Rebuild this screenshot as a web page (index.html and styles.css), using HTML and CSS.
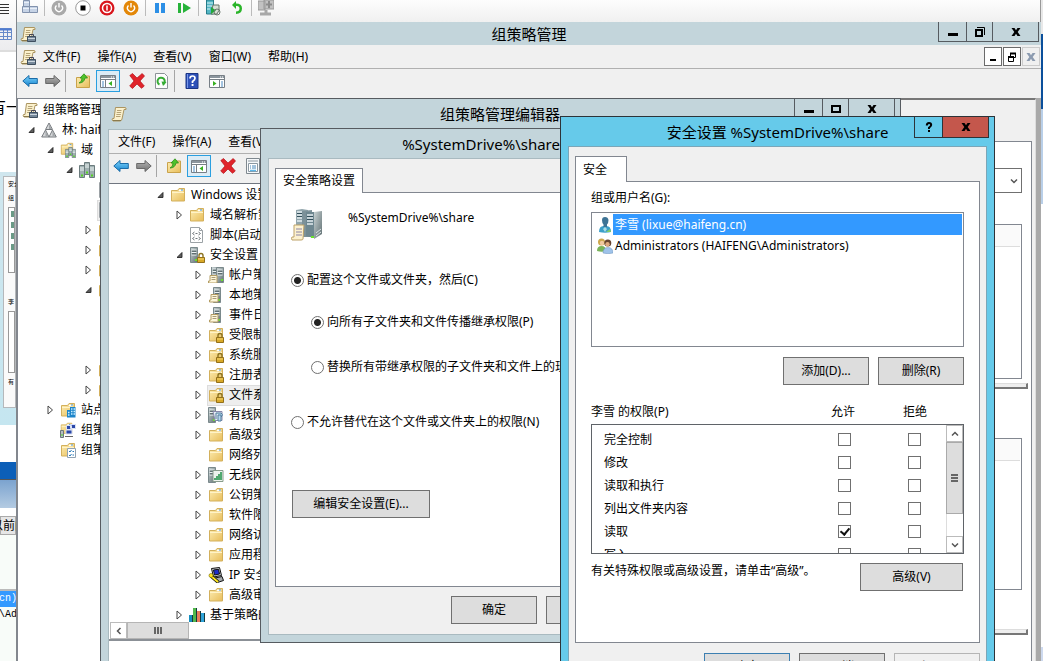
FILE: index.html
```html
<!DOCTYPE html>
<html lang="zh-CN">
<head>
<meta charset="utf-8">
<title>组策略管理</title>
<link rel="stylesheet" href="styles.css">
</head>
<body>
<svg class="defs" width="0" height="0" aria-hidden="true">
<defs>
<linearGradient id="gFolder" x1="0" y1="0" x2="1" y2="1"><stop offset="0" stop-color="#fdeeb4"/><stop offset="1" stop-color="#e8bd5a"/></linearGradient>
<linearGradient id="gBlue" x1="0" y1="0" x2="0" y2="1"><stop offset="0" stop-color="#7fd4fb"/><stop offset="1" stop-color="#1583cf"/></linearGradient>
<linearGradient id="gGray" x1="0" y1="0" x2="0" y2="1"><stop offset="0" stop-color="#b5b5b5"/><stop offset="1" stop-color="#6f6f6f"/></linearGradient>
<linearGradient id="gSrv" x1="0" y1="0" x2="1" y2="1"><stop offset="0" stop-color="#c9d3d4"/><stop offset="1" stop-color="#5f6f72"/></linearGradient>
<symbol id="open" viewBox="0 0 8 8"><path d="M6.200 1.800v4.400H1.800z" fill="#606060" stroke="#222" stroke-width=".8"/></symbol>
<symbol id="shut" viewBox="0 0 8 10"><path d="M1.500 1v8L6 5z" fill="#fff" stroke="#444"/></symbol>
<symbol id="folder" viewBox="0 0 16 16"><path d="M1.500 14V3.500h6L9 1.500h5.500V14z" fill="url(#gFolder)" stroke="#d3b05c"/><path d="M9 3.500h4" stroke="#fff" stroke-width="1.500"/><path d="M11 3h2" stroke="#3e8fd6"/><path d="M2 5.500h12" stroke="#fff3c8"/></symbol>
<symbol id="lock" viewBox="0 0 16 16"><path d="M10 11V8.500a2 2 0 0 1 4 0V11" fill="none" stroke="#8d7422" stroke-width="1.400"/><path d="M8.500 10.500h7v5h-7z" fill="#d9a928" stroke="#93701a"/><path d="M9 12h6" stroke="#f6d873"/></symbol>
<symbol id="flock" viewBox="0 0 16 16"><use href="#folder"/><use href="#lock"/></symbol>
<symbol id="server" viewBox="0 0 16 16"><path d="M3.500.5h7v15h-7z" fill="url(#gSrv)" stroke="#7a898c"/><path d="M4.500 3h5M4.500 5.500h5M4.500 8h5" stroke="#edf3f4"/><path d="M5 4.200h4M5 6.800h4" stroke="#46575b"/><path d="M8 13h2" stroke="#6bdc2d" stroke-width="2"/></symbol>
<symbol id="slock" viewBox="0 0 16 16"><use href="#server" x="-2"/><use href="#lock"/></symbol>
<symbol id="sheet" viewBox="0 0 16 16"><path d="M3 7.500h7v7.500H1.500v-2H3z" fill="#fdf6dc" stroke="#b39c62"/><path d="M4.500 9.500h4M4.500 11.500h4" stroke="#ab9c74"/></symbol>
<symbol id="sscroll" viewBox="0 0 16 16"><use href="#server" x="2"/><use href="#sheet"/></symbol>
<symbol id="sscroll2" viewBox="0 0 16 16"><use href="#server" y="-1"/><use href="#server" x="5"/><use href="#sheet" x="-1" y="1"/></symbol>
<symbol id="scroll" viewBox="0 0 16 16"><path d="M4.500 1.500h9.500q1.500 0 1 2h-2L11 13q-.5 2-2 2H2q-1.500-1-.5-2.500H3z" fill="#fbf1cd" stroke="#ab9561"/><path d="M6 4.500h4.500M5.700 6.500h4.500M5.400 8.500h4.500M5 10.500h4.500" stroke="#b5a377"/><path d="M2 14.500h8" stroke="#8b7a4c"/></symbol>
<symbol id="gpm" viewBox="0 0 16 16"><use href="#scroll"/><path d="M9.500 10V8.500h4V10" fill="none" stroke="#445"/><path d="M7.500 10.500h8v5h-8z" fill="#76889a" stroke="#3f4f5f"/><path d="M8 12.500h7" stroke="#ccd6de"/></symbol>
<symbol id="forest" viewBox="0 0 16 16"><path d="M8 1l3.500 6.500h-7zM4.500 8L8 15H.7zM11.500 8l3.800 7H8z" fill="#d5d7d9" stroke="#777b7f"/><path d="M8 2l2.500 5H8zM4.500 9L7 14H4.500zM11.500 9l2.500 5h-2.500z" fill="#a2a6a9"/></symbol>
<symbol id="servers" viewBox="0 0 16 16"><path d="M5.500.5h5v12h-5zM.5 3.500h5v12h-5zM10.500 3.500h5v12h-5z" fill="#9fb0b1" stroke="#6c7c7e"/><path d="M6 3h4M6 5h4M1 6h4M1 8h4M11 6h4M11 8h4" stroke="#eef5f5"/><path d="M7 10.500h2M2 13.500h2M12 13.500h2" stroke="#53d321" stroke-width="2"/></symbol>
<symbol id="domains" viewBox="0 0 16 16"><use href="#folder" width="14" height="14"/><use href="#servers" x="5" y="5" width="11" height="11"/></symbol>
<symbol id="sites" viewBox="0 0 16 16"><use href="#folder"/><path d="M7 15.500V8h3V5h5.500v10.500z" fill="#1c84c9"/><path d="M11 7h1.500m1 0H15M11 9.500h1.500m1 0H15M8 10.500h1.500M8 13h1.500M11 12h1.500m1 0H15" stroke="#c8edff" stroke-width="1.300"/></symbol>
<symbol id="model" viewBox="0 0 16 16"><use href="#folder" width="13" height="13"/><path d="M6.500 3.500h5v4h-5zM10.500 2.500h5v4h-5zM6 8h6v4H6z" fill="#2a46a8" stroke="#dbe2f4"/><path d="M.5 8.500h3v7h-3z" fill="#b5bec2" stroke="#6b777c"/><path d="M1 13h2" stroke="#50d322"/><path d="M5 14.500h8" stroke="#666"/></symbol>
<symbol id="result" viewBox="0 0 16 16"><use href="#folder"/><path d="M7.500 6.500h8v9h-8z" fill="#fff" stroke="#91a2b2"/><path d="M9 9l1 1 1.500-2M9 13l1 1 1.500-2M12.500 9.500H14M12.500 13H14" fill="none" stroke="#2679b8"/></symbol>
<symbol id="script" viewBox="0 0 16 16"><path d="M1.500.5h9l3 3v12h-12z" fill="#fff" stroke="#9ca2a6"/><path d="M10.500.5v3h3" fill="none" stroke="#9ca2a6"/><path d="M5.500 5L3.500 6.500l2 1.500M9.500 5l2 1.500-2 1.500M5.500 10l-2 1.500 2 1.500M9.500 10l2 1.500-2 1.500M6.500 6.500h2M6.500 11.500h2" fill="none" stroke="#70777c"/></symbol>
<symbol id="wired" viewBox="0 0 16 16"><use href="#server" x="-3"/><path d="M5 4.500h9v9H7z" fill="#e4edf4" stroke="#88a"/><path d="M8 6h5q2 1 1 3l-1 1M8 6v6m2-4h3v6h-3z" fill="#b6d7ee" stroke="#537d9c"/></symbol>
<symbol id="wireless" viewBox="0 0 16 16"><use href="#server" x="-3"/><path d="M5 3.500h10v11H5z" fill="#eef3ee" stroke="#889c8c"/><path d="M7 13v-2m2 2v-4m2 4V7m2 6V5" stroke="#1d9145" stroke-width="1.500"/></symbol>
<symbol id="ip" viewBox="0 0 16 16"><path d="M3.500 1.500l8-1 2 8-8 1.500z" fill="#d0d4d8" stroke="#111"/><path d="M5.500 3l5-.7L11.500 7 6.500 8z" fill="#1d2dcc" stroke="#111"/><path d="M7 11l7-1.500 1.500 4-6 2z" fill="#a5a9ad" stroke="#111"/><path d="M3 9l7 6" stroke="#111" stroke-width="3.500"/><path d="M3 9l7 6" stroke="#ffe820" stroke-width="2"/><circle cx="3" cy="8.500" r="2" fill="#ffe820" stroke="#776800" stroke-width=".6"/></symbol>
<symbol id="bars" viewBox="0 0 16 16"><path d="M0 8h4v8H0z" fill="#168fc0"/><path d="M4 1h4v15H4z" fill="#51b84b"/><path d="M8 4h4v12H8z" fill="#e97c5b"/><path d="M12 6h4v10h-4z" fill="#2fa3d9"/><path d="M3.500 8v8m4-15v15m4-12v12m4-10v10" stroke="#17383c"/></symbol>
<symbol id="back" viewBox="0 0 16 16"><path d="M.8 8L7 2.500v3h8.300v5H7v3z" fill="url(#gBlue)" stroke="#1b6ca8"/></symbol>
<symbol id="fwd" viewBox="0 0 16 16"><path d="M15.200 8L9 2.500v3H.7v5H9v3z" fill="url(#gGray)" stroke="#696969"/></symbol>
<symbol id="up" viewBox="0 0 16 16"><path d="M1.500 14.500v-10h6L9 3h5.500v11.500z" fill="url(#gFolder)" stroke="#c9a24b"/><path d="M4 10q3-1 3-5H5L9 .8 12.500 5H10q-1 5-6 5z" fill="#4fc22b" stroke="#2c8f18" stroke-width=".8"/></symbol>
<symbol id="panel" viewBox="0 0 16 16"><path d="M.5 2.500h15v12H.5z" fill="#fff" stroke="#777f86"/><path d="M1 4h14" stroke="#8b959d" stroke-width="2"/><path d="M11 4h1m1 0h1" stroke="#fff"/><path d="M5.500 6v8" stroke="#777f86"/><path d="M1 6.500h14" stroke="#777f86"/><path d="M2 9h2m-2 2h2m-2 2h2" stroke="#4b8bc4"/><path d="M12 8v5L8.500 10.500z" fill="#38b020"/></symbol>
<symbol id="panelr" viewBox="0 0 16 16"><path d="M.5 2.500h15v12H.5z" fill="#fff" stroke="#777f86"/><path d="M1 4h14" stroke="#8b959d" stroke-width="2"/><path d="M11 4h1m1 0h1" stroke="#fff"/><path d="M10.500 6v8" stroke="#777f86"/><path d="M1 6.500h14" stroke="#777f86"/><path d="M12 9h2m-2 2h2m-2 2h2" stroke="#4b8bc4"/><path d="M4 8v5l3.500-2.500z" fill="#38b020"/></symbol>
<symbol id="del" viewBox="0 0 16 16"><path d="M.8 2.500L3.500.5 8 5l5.200-4.500L15.500 3 11 8l4.300 5-2.800 2.300L8 11l-4.500 4.500L.7 13 5 8z" fill="#e0242b" stroke="#b4121a" stroke-width=".7"/></symbol>
<symbol id="refresh" viewBox="0 0 16 16"><path d="M1.500.5h9l3 3v12h-12z" fill="#fdfdfd" stroke="#8b9297"/><path d="M5.500 11.500A3.600 3.600 0 1 1 9.500 11" fill="none" stroke="#35ac33" stroke-width="2"/><path d="M7.500 8.500l5 .5-3.500 4z" fill="#35ac33"/></symbol>
<symbol id="help" viewBox="0 0 16 16"><path d="M2 .5h12v15H2z" fill="#2d50b8" stroke="#1b3584"/><path d="M3.500 1v14" stroke="#7897e8"/><path d="M6 5.500q0-2.500 2.500-2.500T11 5.300q0 1.500-2.500 3.200v1.500" fill="none" stroke="#fff" stroke-width="1.700"/><path d="M7.600 12h1.900" stroke="#fff" stroke-width="2"/></symbol>
<symbol id="props" viewBox="0 0 16 16"><path d="M1.500.5h13v15h-13z" fill="#f5f8fa" stroke="#7f888f"/><path d="M3.500 5.500h9v8h-9z" fill="#fff" stroke="#8b98a2"/><path d="M3 3h10" stroke="#8d98a1"/><path d="M5 8h1m1 0h4M5 10h1m1 0h4" stroke="#4487bb"/><path d="M5 12.500h6" stroke="#5cb6e8" stroke-width="1.500"/></symbol>
<symbol id="user" viewBox="0 0 16 16"><path d="M2 15q0-6 4.500-6h3q4.500 0 4.500 6-6 1.500-12 0z" fill="#3c9fc9"/><path d="M8 10l2 2-2 3-2-3z" fill="#a9dbe4"/><path d="M5 3q0-3 3-3t3.500 3q0 3-1.500 4.500V10H6.500V7.500Q5 6 5 3z" fill="#3d7395"/><path d="M9 15l4-3 1 3z" fill="#83ce64"/></symbol>
<symbol id="users" viewBox="0 0 16 16"><circle cx="4.500" cy="4" r="3.500" fill="#cda74b"/><circle cx="5" cy="5" r="2.200" fill="#f2caa0"/><path d="M0 13q0-5 4.500-5T9 13q-4 1.500-9 0z" fill="#79b35a"/><circle cx="10.800" cy="5" r="3.500" fill="#66432f"/><circle cx="10.500" cy="6.300" r="2.200" fill="#e0ab80"/><path d="M6 15q0-5.500 5-5.500t5 5.500q-5 1.500-10 0z" fill="#9fc3ea" stroke="#6c93bd" stroke-width=".5"/></symbol>
<symbol id="bigsrv" viewBox="0 0 32 32"><path d="M5 1l6-1 6 1v27H5z" fill="#92a6ad"/><path d="M11 2l10-1v27H11z" fill="#7c9199"/><path d="M15 3h8v26l-8-2z" fill="#6e8790"/><path d="M23 3l8-1v23l-8 5z" fill="url(#gSrv)"/><path d="M6 3h5M6 6h5M6 9h5M6 12h5M16 6h6M16 9h6M16 12h6M16 15h6" stroke="#e3edf0" stroke-width="1.500"/><path d="M6 4.500h5M6 7.500h5M16 7.500h6M16 10.500h6" stroke="#34505c"/><path d="M20 28h3" stroke="#67e22c" stroke-width="2"/><path d="M25 24l5-4M25 27l5-4" stroke="#dce3e5"/><path d="M3 16h10l-1 14q0 1-2 1H1q-1-2 0-3h2z" fill="#fcf1cf" stroke="#bda269"/><path d="M5 20h6M5 23h6M5 26h6" stroke="#8b84a5"/></symbol>
<symbol id="vmnet" viewBox="0 0 16 16"><path d="M1.500.5h6v6h-6zM.5 6.500h7v6h-7zM7.500 6.500h8v6h-8z" fill="#c6d3e6" stroke="#8292ad"/><path d="M2 2.500h5M1 8.500h6M8 8.500h7" stroke="#e9eff8"/></symbol>
<symbol id="vmsrv" viewBox="0 0 16 16"><path d="M1.500 0h7v14h-7z" fill="#54b6c5" stroke="#257b89"/><path d="M2 3h6M2 6h6M2 9h3" stroke="#d9f4f6"/><path d="M8 5h6q1 6-2 9H6z" fill="#d8dfd6" stroke="#66766a"/><path d="M6 7v7l5-3.500z" fill="#21a83a"/><circle cx="12" cy="12" r="3" fill="none" stroke="#66766a"/></symbol>
<symbol id="undo" viewBox="0 0 16 16"><path d="M3 5l4-4v2.500q6 0 6 5T7 14v-2.500q3.500 0 3.500-3T7 6v3z" fill="#2bb52a"/></symbol>
<symbol id="vmgray" viewBox="0 0 16 16"><path d="M0 1h7v9H0zM6 0h10v9H6z" fill="#c2c2c2" stroke="#999"/><path d="M11 1v7M8 4.500h6" stroke="#8c8c8c" stroke-width="2"/><path d="M8 10v3M2 14h11" stroke="#a8a8a8" stroke-width="3"/></symbol>
<symbol id="min" viewBox="0 0 12 12"><path d="M1 8.500h10" stroke="#000" stroke-width="3"/></symbol>
<symbol id="max" viewBox="0 0 12 12"><path d="M2 3h8v6H2z" fill="none" stroke="#000" stroke-width="2"/></symbol>
<symbol id="restore" viewBox="0 0 12 12"><path d="M2 4h6v6H2z" fill="none" stroke="#000" stroke-width="2"/><path d="M3 1.500h7.500V9" fill="none" stroke="#000"/></symbol>
<symbol id="close" viewBox="0 0 12 12"><path d="M1.500 2h3L6 4.200 7.500 2h3L7.700 6l2.800 4h-3L6 7.800 4.500 10h-3l2.800-4z" fill="currentColor"/></symbol>
<symbol id="q" viewBox="0 0 12 12"><path d="M3.800 4.500Q3.800 2 6 2t2.200 2q0 1-2.200 2.700V8" fill="none" stroke="#000" stroke-width="2"/><path d="M5 10h2" stroke="#000" stroke-width="2"/></symbol>
<symbol id="chev" viewBox="0 0 8 8"><path d="M1 2.500L4 5.500l3-3" fill="none" stroke="#555" stroke-width="1.500"/></symbol>
</defs>
</svg>

<main class="desktop">
  <aside class="behind-left" aria-hidden="true">
    <div class="doc-bar">
      <svg class="doc-lines" viewBox="0 0 9 12"><path d="M0 .5h9M0 3.500h9M0 6.500h9M0 9.500h9" stroke="#333"/></svg>
      <svg class="doc-table" viewBox="0 0 12 13"><path d="M0 .5h11.500v11H0M0 4.500h11M0 8.500h11M3.500 1v11M7.500 1v11" fill="none" stroke="#6689c9"/><path d="M0 1.500h11" stroke="#4f7bd0" stroke-width="2"/></svg>
    </div>
    <p class="doc-text">有一</p>
    <div class="thumb"><div class="thumb-page"><span>安全</span><span>组</span><div class="thumb-list"><i></i><i></i><i></i><i></i></div><span>李</span><div class="thumb-box"></div><span>有</span></div></div>
    <div class="blue-bar"></div>
    <div class="glass"></div>
    <div class="old-head">以前的</div>
    <div class="old-list"></div>
    <div class="old-row">cn)</div>
    <div class="old-name">\Ad</div>
  </aside>
  <aside class="behind-right" aria-hidden="true"></aside>

  <section class="vm">
    <div class="vm-bar">
      <svg class="i16" aria-hidden="true"><use href="#vmnet"/></svg><i class="sep"></i>
      <svg class="i16" viewBox="0 0 16 16"><circle cx="8" cy="8" r="7.500" fill="#a9a9a9"/><path d="M5.500 5.500a3.500 3.500 0 1 0 5 0M8 3v4.500" fill="none" stroke="#fff" stroke-width="1.400"/></svg>
      <svg class="i16" viewBox="0 0 16 16"><circle cx="8" cy="8" r="7.300" fill="#fff" stroke="#999"/><path d="M5.500 5.500h5v5h-5z"/></svg>
      <svg class="i16" viewBox="0 0 16 16"><circle cx="8" cy="8" r="7.500" fill="#d9151c"/><circle cx="8" cy="8" r="4.500" fill="none" stroke="#fff" stroke-width="1.500"/><path d="M8 5.500v5" stroke="#fff" stroke-width="1.500"/></svg>
      <svg class="i16" viewBox="0 0 16 16"><circle cx="8" cy="8" r="7.500" fill="#e38708"/><path d="M5.500 5.500a3.500 3.500 0 1 0 5 0M8 3v4.500" fill="none" stroke="#fff" stroke-width="1.400"/></svg>
      <i class="sep"></i>
      <svg class="i16" viewBox="0 0 16 16"><path d="M3 3h4v10H3zM9 3h4v10H9z" fill="#2c8fe6"/></svg>
      <svg class="i16" viewBox="0 0 16 16"><path d="M2 3h3v10H2zM7 3v10l8-5z" fill="#27b33a"/></svg>
      <i class="sep"></i>
      <svg class="i16" aria-hidden="true"><use href="#vmsrv"/></svg>
      <svg class="i16" aria-hidden="true"><use href="#undo"/></svg>
      <i class="sep"></i>
      <svg class="i16" aria-hidden="true"><use href="#vmgray"/></svg>
    </div>

    <header class="gpm-title">
      <svg class="i16"><use href="#gpm"/></svg>
      <h1 class="title">组策略管理</h1>
      <div class="controls">
        <button class="ctl" aria-label="最小化"><svg class="i12"><use href="#min"/></svg></button>
        <button class="ctl mid" aria-label="还原"><svg class="i12"><use href="#restore"/></svg></button>
        <button class="ctl wide" aria-label="关闭"><svg class="i12"><use href="#close"/></svg></button>
      </div>
    </header>
    <nav class="menubar">
      <svg class="i16"><use href="#gpm"/></svg>
      <button>文件(F)</button><button>操作(A)</button><button>查看(V)</button><button>窗口(W)</button><button>帮助(H)</button>
      <div class="mdi">
        <button aria-label="最小化子窗口"><svg class="i12" viewBox="0 0 12 12"><path d="M3 9h6" stroke="#000" stroke-width="2"/></svg></button>
        <button aria-label="还原子窗口"><svg class="i12" viewBox="0 0 12 12"><path d="M2.500 6.500h5v4h-5zM4.500 5V2.500h5v4H8" fill="none" stroke="#000"/><path d="M2 6h6M4 2.500h6" stroke="#000" stroke-width="2"/></svg></button>
        <button class="off" aria-label="关闭子窗口"><svg class="i12"><use href="#close"/></svg></button>
      </div>
    </nav>
    <div class="toolbar">
      <button aria-label="后退"><svg class="i16"><use href="#back"/></svg></button>
      <button aria-label="前进"><svg class="i16"><use href="#fwd"/></svg></button>
      <i class="sep"></i>
      <button class="wide" aria-label="上一级"><svg class="i16"><use href="#up"/></svg></button>
      <button class="on" aria-label="显示控制台树"><svg class="i16"><use href="#panel"/></svg></button>
      <button class="wider" aria-label="删除"><svg class="i16"><use href="#del"/></svg></button>
      <button aria-label="刷新"><svg class="i16"><use href="#refresh"/></svg></button>
      <i class="sep"></i>
      <button class="wide" aria-label="帮助"><svg class="i16"><use href="#help"/></svg></button>
      <button aria-label="操作窗格"><svg class="i16"><use href="#panelr"/></svg></button>
    </div>
    <div class="gpm-body">
      <div class="gpm-tree">
        <ul class="tree">
          <li><div class="row"><svg class="i16"><use href="#gpm"/></svg>组策略管理</div>
          <ul class="flat">
            <li><div class="row"><svg class="tw"><use href="#open"/></svg><svg class="i16"><use href="#forest"/></svg>林: haifeng</div>
            <ul>
              <li><div class="row"><svg class="tw"><use href="#open"/></svg><svg class="i16"><use href="#domains"/></svg>域</div>
              <ul>
                <li><div class="row"><svg class="tw"><use href="#open"/></svg><svg class="i16"><use href="#servers"/></svg></div>
                <ul>
                  <li><div class="row leaf"><svg class="i16"><use href="#script"/></svg></div></li>
                  <li><div class="row leaf"><span class="pick"><svg class="i16"><use href="#script"/></svg></span></div></li>
                  <li><div class="row"><svg class="tw"><use href="#shut"/></svg><svg class="i16"><use href="#folder"/></svg></div></li>
                  <li><div class="row"><svg class="tw"><use href="#shut"/></svg><svg class="i16"><use href="#folder"/></svg></div></li>
                  <li><div class="row"><svg class="tw"><use href="#shut"/></svg><svg class="i16"><use href="#folder"/></svg></div></li>
                  <li><div class="row"><svg class="tw"><use href="#open"/></svg><svg class="i16"><use href="#folder"/></svg></div>
                    <ul><li><div class="row"></div></li><li><div class="row"></div></li><li><div class="row"></div></li></ul></li>
                  <li><div class="row"><svg class="tw"><use href="#shut"/></svg><svg class="i16"><use href="#folder"/></svg></div></li>
                  <li><div class="row"><svg class="tw"><use href="#shut"/></svg><svg class="i16"><use href="#folder"/></svg></div></li>
                </ul></li>
              </ul></li>
              <li><div class="row"><svg class="tw"><use href="#shut"/></svg><svg class="i16"><use href="#sites"/></svg>站点</div></li>
              <li><div class="row leaf"><svg class="i16"><use href="#model"/></svg>组策略建模</div></li>
              <li><div class="row leaf"><svg class="i16"><use href="#result"/></svg>组策略结果</div></li>
            </ul></li>
          </ul></li>
        </ul>
      </div>
      <div class="gpm-pane">
        <div class="scope">
          <div class="combo"><svg class="chev"><use href="#chev"/></svg></div>
          <div class="grid-box"><div class="grid-head"></div></div>
          <div class="ridge"></div>
          <div class="grid-box second"><div class="grid-head"></div></div>
          <div class="ridge low"></div>
        </div>
      </div>
      <div class="edge"></div>
    </div>
  </section>

  <section class="win editor">
    <header class="titlebar">
      <svg class="i16"><use href="#scroll"/></svg>
      <h2 class="title">组策略管理编辑器</h2>
      <div class="controls">
        <button class="ctl" aria-label="最小化"><svg class="i12"><use href="#min"/></svg></button>
        <button class="ctl mid" aria-label="最大化"><svg class="i12"><use href="#max"/></svg></button>
        <button class="ctl wide" aria-label="关闭"><svg class="i12"><use href="#close"/></svg></button>
      </div>
    </header>
    <div class="editor-client">
      <nav class="menubar"><button>文件(F)</button><button>操作(A)</button><button>查看(V)</button></nav>
      <div class="toolbar">
        <button aria-label="后退"><svg class="i16"><use href="#back"/></svg></button>
        <button aria-label="前进"><svg class="i16"><use href="#fwd"/></svg></button>
        <i class="sep"></i>
        <button class="wide" aria-label="上一级"><svg class="i16"><use href="#up"/></svg></button>
        <button class="on" aria-label="显示控制台树"><svg class="i16"><use href="#panel"/></svg></button>
        <button class="wider" aria-label="删除"><svg class="i16"><use href="#del"/></svg></button>
        <button aria-label="属性"><svg class="i16"><use href="#props"/></svg></button>
      </div>
      <div class="editor-tree">
        <ul class="tree deep">
          <li><div class="row"><svg class="tw"><use href="#open"/></svg><svg class="i16"><use href="#folder"/></svg>Windows 设置</div>
          <ul>
            <li><div class="row"><svg class="tw"><use href="#shut"/></svg><svg class="i16"><use href="#folder"/></svg>域名解析策略</div></li>
            <li><div class="row leaf"><svg class="i16"><use href="#script"/></svg>脚本(启动/关机)</div></li>
            <li><div class="row"><svg class="tw"><use href="#open"/></svg><svg class="i16"><use href="#slock"/></svg>安全设置</div>
            <ul>
              <li><div class="row"><svg class="tw"><use href="#shut"/></svg><svg class="i16"><use href="#sscroll2"/></svg>帐户策略</div></li>
              <li><div class="row"><svg class="tw"><use href="#shut"/></svg><svg class="i16"><use href="#sscroll"/></svg>本地策略</div></li>
              <li><div class="row"><svg class="tw"><use href="#shut"/></svg><svg class="i16"><use href="#sscroll"/></svg>事件日志</div></li>
              <li><div class="row"><svg class="tw"><use href="#shut"/></svg><svg class="i16"><use href="#flock"/></svg>受限制的组</div></li>
              <li><div class="row"><svg class="tw"><use href="#shut"/></svg><svg class="i16"><use href="#flock"/></svg>系统服务</div></li>
              <li><div class="row"><svg class="tw"><use href="#shut"/></svg><svg class="i16"><use href="#flock"/></svg>注册表</div></li>
              <li><div class="row"><svg class="tw"><use href="#shut"/></svg><span class="pick"><svg class="i16"><use href="#flock"/></svg>文件系统</span></div></li>
              <li><div class="row"><svg class="tw"><use href="#shut"/></svg><svg class="i16"><use href="#wired"/></svg>有线网络</div></li>
              <li><div class="row"><svg class="tw"><use href="#shut"/></svg><svg class="i16"><use href="#folder"/></svg>高级安全</div></li>
              <li><div class="row leaf"><svg class="i16"><use href="#folder"/></svg>网络列表</div></li>
              <li><div class="row"><svg class="tw"><use href="#shut"/></svg><svg class="i16"><use href="#wireless"/></svg>无线网络</div></li>
              <li><div class="row"><svg class="tw"><use href="#shut"/></svg><svg class="i16"><use href="#folder"/></svg>公钥策略</div></li>
              <li><div class="row"><svg class="tw"><use href="#shut"/></svg><svg class="i16"><use href="#folder"/></svg>软件限制</div></li>
              <li><div class="row"><svg class="tw"><use href="#shut"/></svg><svg class="i16"><use href="#folder"/></svg>网络访问</div></li>
              <li><div class="row"><svg class="tw"><use href="#shut"/></svg><svg class="i16"><use href="#folder"/></svg>应用程序</div></li>
              <li><div class="row"><svg class="tw"><use href="#shut"/></svg><svg class="i16"><use href="#ip"/></svg>IP 安全策略</div></li>
              <li><div class="row"><svg class="tw"><use href="#shut"/></svg><svg class="i16"><use href="#folder"/></svg>高级审核</div></li>
            </ul></li>
            <li><div class="row"><svg class="tw"><use href="#shut"/></svg><svg class="i16"><use href="#bars"/></svg>基于策略的 QoS</div></li>
          </ul></li>
        </ul>
      </div>
      <div class="hscroll">
        <button aria-label="向左滚动"><svg class="chev left"><use href="#chev"/></svg></button>
        <div class="thumb-x"><i></i><i></i><i></i></div>
      </div>
      <div class="editor-rest"></div>
    </div>
  </section>

  <section class="win props">
    <header class="titlebar"><h2 class="title">%SystemDrive%\share 属性</h2></header>
    <div class="client">
      <div class="tabs"><button class="tab">安全策略设置</button></div>
      <div class="sheet">
        <div class="object"><svg class="i32"><use href="#bigsrv"/></svg><span>%SystemDrive%\share</span></div>
        <label class="opt first"><input type="radio" name="mode" checked>配置这个文件或文件夹，然后(C)</label>
        <label class="opt sub"><input type="radio" name="inherit" checked>向所有子文件夹和文件传播继承权限(P)</label>
        <label class="opt sub second"><input type="radio" name="inherit">替换所有带继承权限的子文件夹和文件上的现有权限(R)</label>
        <label class="opt deny"><input type="radio" name="mode">不允许替代在这个文件或文件夹上的权限(N)</label>
        <button class="btn edit">编辑安全设置(E)...</button>
      </div>
      <div class="actions"><button class="btn">确定</button><button class="btn">取消</button><button class="btn">应用(A)</button></div>
    </div>
  </section>

  <section class="win security">
    <header class="titlebar">
      <h2 class="title">安全设置 %SystemDrive%\share</h2>
      <div class="controls">
        <button class="ctl" aria-label="帮助"><svg class="i12"><use href="#q"/></svg></button>
        <button class="ctl wide red" aria-label="关闭"><svg class="i12"><use href="#close"/></svg></button>
      </div>
    </header>
    <div class="client">
      <div class="tabs"><button class="tab">安全</button></div>
      <div class="sheet">
        <p class="label" id="names">组或用户名(G):</p>
        <ul class="listbox" aria-labelledby="names">
          <li class="sel"><svg class="i16"><use href="#user"/></svg><span>李雪 (lixue@haifeng.cn)</span></li>
          <li><svg class="i16"><use href="#users"/></svg><span>Administrators (HAIFENG\Administrators)</span></li>
        </ul>
        <div class="pair"><button class="btn">添加(D)...</button><button class="btn">删除(R)</button></div>
        <div class="perm-head"><span class="who">李雪 的权限(P)</span><span class="col">允许</span><span class="col">拒绝</span></div>
        <div class="perm-box">
          <table class="perms">
            <tr><th scope="row">完全控制</th><td><input type="checkbox" aria-label="允许完全控制"></td><td><input type="checkbox" aria-label="拒绝完全控制"></td></tr>
            <tr><th scope="row">修改</th><td><input type="checkbox" aria-label="允许修改"></td><td><input type="checkbox" aria-label="拒绝修改"></td></tr>
            <tr><th scope="row">读取和执行</th><td><input type="checkbox" aria-label="允许读取和执行"></td><td><input type="checkbox" aria-label="拒绝读取和执行"></td></tr>
            <tr><th scope="row">列出文件夹内容</th><td><input type="checkbox" aria-label="允许列出文件夹内容"></td><td><input type="checkbox" aria-label="拒绝列出文件夹内容"></td></tr>
            <tr><th scope="row">读取</th><td><input type="checkbox" aria-label="允许读取" checked></td><td><input type="checkbox" aria-label="拒绝读取"></td></tr>
            <tr><th scope="row">写入</th><td><input type="checkbox" aria-label="允许写入"></td><td><input type="checkbox" aria-label="拒绝写入"></td></tr>
          </table>
          <div class="vscroll">
            <button aria-label="向上滚动"><svg class="chev up"><use href="#chev"/></svg></button>
            <div class="thumb-y"><i></i><i></i><i></i></div>
            <div class="track"></div>
            <button aria-label="向下滚动"><svg class="chev"><use href="#chev"/></svg></button>
          </div>
        </div>
        <div class="adv"><span>有关特殊权限或高级设置，请单击“高级”。</span><button class="btn">高级(V)</button></div>
      </div>
      <div class="actions"><button class="btn default">确定</button><button class="btn">取消</button><button class="btn" disabled>应用(A)</button></div>
    </div>
  </section>
</main>
</body>
</html>
```

FILE: styles.css
```css
* { box-sizing: border-box; }
html, body { height: 100%; }
body {
  margin: 0;
  font: 12px/20px "Noto Sans", "Noto Sans CJK SC", sans-serif;
  color: #000;
  background: #fff;
}
button { font: inherit; color: inherit; padding: 0; margin: 0; border: 0; background: none; border-radius: 0; }
ul { list-style: none; margin: 0; padding: 0; }
p, h1, h2 { margin: 0; font-weight: 400; }
svg { display: block; flex: none; }
.defs { position: absolute; }
.i12 { width: 12px; height: 12px; }
.i16 { width: 16px; height: 16px; }
.i32 { width: 32px; height: 32px; }
.chev { width: 8px; height: 8px; }
.chev.up { transform: rotate(180deg); }
.chev.left { transform: rotate(90deg); }

.desktop { position: relative; height: 100vh; overflow: hidden; }

/* Strips of other windows */
.behind-left { position: absolute; left: 0; top: 0; bottom: 0; width: 17px; border-right: 1px solid #83878c; overflow: hidden; display: flex; flex-direction: column; background: #fff; }
.behind-left > * { flex: none; }
.doc-bar { height: 52px; padding-top: 4px; display: flex; flex-direction: column; gap: 12px; background: linear-gradient(#fdfdfd, #ececee); border-bottom: 2px solid #ddd; }
.doc-lines { width: 9px; height: 12px; }
.doc-table { width: 12px; height: 13px; }
.doc-text { height: 120px; padding-top: 45px; font-size: 16px; text-indent: -10px; white-space: nowrap; }
.thumb { height: 253px; padding: 4px 0 0 3px; background: linear-gradient(#cfe6ee, #c5e6f0); margin-bottom: 37px; }
.thumb-page { height: 232px; border: 1px solid #b5b8bb; background: #fafafa; padding: 2px 0 0 4px; font-size: 6px; line-height: 10px; display: flex; flex-direction: column; gap: 4px; white-space: nowrap; }
.thumb-list { height: 66px; border: 1px solid #999; padding: 3px 2px; display: flex; flex-direction: column; gap: 5px; background: #fff; flex: none; margin-bottom: 20px; }
.thumb-list i { height: 6px; width: 3px; background: #6b9a86; flex: none; }
.thumb-box { height: 62px; border: 1px solid #999; background: #fff; flex: none; }
.blue-bar { height: 17px; background: #0c5fb8; }
.glass { height: 29px; border-top: 1px solid #555; background: linear-gradient(#7ba3cf, #b4cbe2); }
.old-head { margin-top: 8px; height: 19px; border: 1px solid #aaa; background: #e6e6e6; text-indent: -10px; line-height: 18px; white-space: nowrap; }
.old-list { height: 56px; background: #f8fcf9; border-bottom: 2px solid #bbb; }
.old-row { height: 16px; background: #3399ff; color: #fff; font: 10px/16px "Liberation Mono", monospace; text-indent: -1px; }
.old-name { flex: 1 0 auto; background: #f8fcf9; font: 10px/16px "Liberation Mono", monospace; text-indent: -1px; }
.behind-right { position: absolute; right: 0; top: 0; bottom: 0; width: 2px; background: linear-gradient(#e8e8e8 0 34px, #0b4f9b 34px 109px, #b9cfe8 109px 204px, #fff 204px 647px, #cdd9ee 647px); }

/* Console window */
.vm { position: absolute; left: 17px; right: 2px; top: 0; bottom: 0; background: #f0f0f0; display: flex; flex-direction: column; }
.vm-bar { height: 22px; flex: none; display: flex; align-items: flex-start; gap: 8px; padding-left: 5px; background: linear-gradient(#fdfdfd, #f0f0f0); border-right: 1px solid #999; }
.vm-bar .sep { width: 1px; height: 16px; background: #bbb; margin: 0 -2px; }
.gpm-title { height: 23px; flex: none; display: flex; align-items: center; padding-left: 3px; background: #c3d5db; position: relative; }
.title { font-size: 15px; line-height: 22px; text-align: center; white-space: nowrap; flex: 1; }
.gpm-title .title { padding-right: 19px; }
.controls { display: flex; align-self: flex-start; position: absolute; right: 2px; top: 0; }
.ctl { width: 28px; height: 20px; display: grid; place-items: center; border: 1px solid #565b60; border-top: 0; border-right: 0; }
.ctl.mid { width: 26px; }
.ctl.wide { width: 47px; border-right: 1px solid #565b60; }
.menubar { height: 24px; flex: none; display: flex; align-items: center; gap: 17px; padding-left: 3px; border-bottom: 1px solid #b0b0b0; background: #f0f0f0; }
.menubar > svg { margin-right: -10px; }
.mdi { display: flex; gap: 1px; margin-left: auto; padding-right: 1px; }
.mdi button { width: 18px; height: 19px; border: 1px solid #6a6a6a; background: #fff; display: grid; place-items: center; }
.mdi .off { border-color: #ccc; background: #f0f0f0; color: #8c9bb0; }
.toolbar { height: 29px; flex: none; display: flex; padding: 1px 0 0 1px; background: #f0f0f0; }
.toolbar button { width: 23px; height: 22px; display: grid; place-items: center; }
.toolbar .wide { width: 27px; }
.toolbar .wider { width: 27px; margin-left: 3px; }
.toolbar .on { width: 24px; border: 1px solid #2a9fe0; background: #dcecf6; }
.toolbar .sep { width: 1px; height: 22px; background: #a5a5a5; margin: 0 3px 0 1px; }
.gpm-body { flex: 1; min-height: 0; display: flex; }
.gpm-tree { width: 90px; flex: none; background: #fff; border: 1px solid #828790; border-width: 1px 0 0 1px; padding: 1px 0 0 4px; overflow: hidden; }
.gpm-pane { flex: 1; border-top: 2px solid #777; padding: 41px 3px 0 0; border-right: 1px solid #ddd; overflow: hidden; }
.edge { width: 5px; background: #a9a9a9; }
.scope { height: 100%; background: #fff; border: 1px solid #828790; border-bottom: 0; padding: 26px 3px 0 20px; display: flex; flex-direction: column; }
.combo { height: 25px; flex: none; border: 1px solid #707070; margin-right: 6px; padding: 8px 3px; display: flex; justify-content: flex-end; }
.grid-box { height: 155px; flex: none; margin: 31px 6px 0 0; border: 1px solid #828790; padding-right: 1px; }
.grid-box.second { height: 152px; margin-top: 49px; }
.grid-head { height: 22px; background: #fafafa; border-bottom: 1px solid #ddd; }
.ridge { height: 6px; flex: none; margin-top: 4px; border: solid #777; border-width: 1px 2px 2px 0; border-top-color: #ddd; background: #eee; }
.ridge.low { margin-top: 39px; }

/* Trees */
.tree { white-space: nowrap; }
.tree ul { padding-left: 19px; }
.tree ul.flat { padding-left: 0; }
.row { height: 20px; display: flex; align-items: center; }
.row .i16 { margin-right: 5px; }
.row .tw { width: 9px; height: 10px; margin: 0 5px; }
.row.leaf { padding-left: 19px; }
.pick { display: flex; align-items: center; background: #eee; outline: 1px solid #ddd; height: 19px; }
.deep { padding: 1px 0 0 42px; }

/* Floating windows */
.win { position: absolute; border: 1px solid #565b60; background: #c3d5db; display: flex; flex-direction: column; }
.titlebar { position: relative; flex: none; height: 29px; display: flex; align-items: center; }
.client { background: #f0f0f0; border: 1px solid #a9bac0; padding: 9px 6px 0; flex: 1; min-height: 0; display: flex; flex-direction: column; }
.tabs { display: flex; }
.tab { height: 25px; padding: 0 7px; border: 1px solid #828790; border-bottom: 0; background: #fff; margin-bottom: -1px; position: relative; }
.sheet { background: #fff; border: 1px solid #828790; padding: 0 15px; }
.btn { height: 28px; width: 86px; border: 1px solid #707070; background: #ddd; line-height: 20px; flex: none; }
.btn.default { border-color: #3c7fb1; }
.btn:disabled { border-color: #b5b5b5; background: #f0f0f0; color: #838383; }
.actions { display: flex; justify-content: flex-end; gap: 9px; padding-top: 10px; }

.editor { left: 100px; top: 98px; width: 801px; bottom: -40px; padding: 0 7px; }
.editor .titlebar { height: 30px; padding: 0 0 0 3px; }
.editor .controls { right: -2px; }
.editor .titlebar .title { padding-right: 20px; }
.editor-client { flex: 1; min-height: 0; display: flex; flex-direction: column; background: #f0f0f0; border: 1px solid #a9bac0; }
.editor-client .menubar { padding-left: 9px; }
.editor-client .toolbar { padding-left: 0; }
.editor-tree { height: 439px; flex: none; overflow: hidden; background: #fff; border-top: 1px solid #707680; }
.hscroll { height: 19px; flex: none; display: flex; background: #fff; border-bottom: 2px solid #8b9096; padding-left: 1px; }
.hscroll button { width: 17px; border: 1px solid #bbb; display: grid; place-items: center; background: #fff; }
.thumb-x { width: 62px; background: #ddd; border: 1px solid #b5b5b5; display: flex; justify-content: center; align-items: center; gap: 1px; }
.thumb-x i { width: 2px; height: 7px; background: #666; }
.editor-rest { flex: 1; background: #fff; }

.props { left: 260px; top: 128px; width: 476px; padding: 0 7px 7px; }
.props .sheet { height: 395px; padding: 16px 15px 0; }
.object { display: flex; gap: 25px; }
.object span { line-height: 18px; }
.opt { display: flex; align-items: center; gap: 3px; height: 20px; white-space: nowrap; }
.opt.first { margin-top: 29px; }
.opt.sub { margin: 22px 0 0 20px; }
.opt.sub.second { margin-top: 25px; }
.opt.deny { margin-top: 35px; }
input { appearance: none; margin: 0; flex: none; background: #fff; border: 1px solid #707070; width: 13px; height: 13px; display: block; }
input[type=radio] { border-radius: 50%; }
input[type=radio]:checked { background: radial-gradient(circle, #222 0 3px, #fff 4px); }
.edit { width: 138px; margin: 58px 0 0 1px; }
.props .client { padding-bottom: 10px; }
.props .actions { padding-top: 9px; justify-content: flex-start; padding-left: 176px; }

.security { left: 560px; top: 116px; width: 435px; bottom: -40px; background: #66caea; border-color: #2d3338; padding: 0 7px; }
.security .controls { right: -2px; }
.security .ctl { height: 21px; border-color: #2d3338; }
.security .red { background: #c4574c; }
.security .client { border-color: #7ba6b8; }
.security .tab { width: 52px; height: 26px; text-align: left; }
.security .sheet { padding-top: 6px; height: 462px; flex: none; display: flex; flex-direction: column; }
.listbox { height: 135px; flex: none; margin-top: 4px; border: 1px solid #828790; padding: 1px; }
.listbox li { display: flex; align-items: center; height: 21px; padding-left: 4px; }
.listbox span { flex: 1; line-height: 21px; padding-left: 2px; white-space: nowrap; }
.listbox .sel span { background: #3399ff; color: #fff; }
.pair { display: flex; justify-content: flex-end; gap: 9px; margin-top: 10px; }
.perm-head { display: flex; margin-top: 17px; height: 22px; padding-right: 13px; }
.who { flex: 1; }
.col { width: 72px; text-align: center; }
.perm-box { height: 130px; flex: none; border: 1px solid #5f6368; display: flex; overflow: hidden; }
.perms { border-collapse: collapse; flex: 1; margin-top: 3px; height: 138px; table-layout: fixed; }
.perms tr { height: 23px; }
.perms th { text-align: left; font-weight: 400; padding: 0 0 0 12px; line-height: 20px; }
.perms td { width: 70px; padding: 0 0 0 28px; }
.perms td:last-child { width: 66px; }
input[type=checkbox]:checked { position: relative; }
input[type=checkbox]:checked::after { content: ""; box-sizing: border-box; position: absolute; left: 3px; top: 0; width: 6px; height: 9px; border: solid #111; border-width: 0 2px 2px 0; transform: rotate(40deg); }
.vscroll { width: 17px; flex: none; display: flex; flex-direction: column; }
.vscroll button { height: 17px; border: 1px solid #bbb; display: grid; place-items: center; }
.thumb-y { height: 72px; background: #ddd; border: 1px solid #aaa; display: flex; flex-direction: column; align-items: center; justify-content: center; gap: 1px; }
.thumb-y i { width: 7px; height: 2px; background: #666; }
.track { flex: 1; border-left: 1px solid #ddd; }
.adv { display: flex; justify-content: space-between; margin-top: 9px; }
.adv span { margin-top: -2px; white-space: nowrap; }
.adv .btn { width: 103px; margin-right: 1px; }
```
